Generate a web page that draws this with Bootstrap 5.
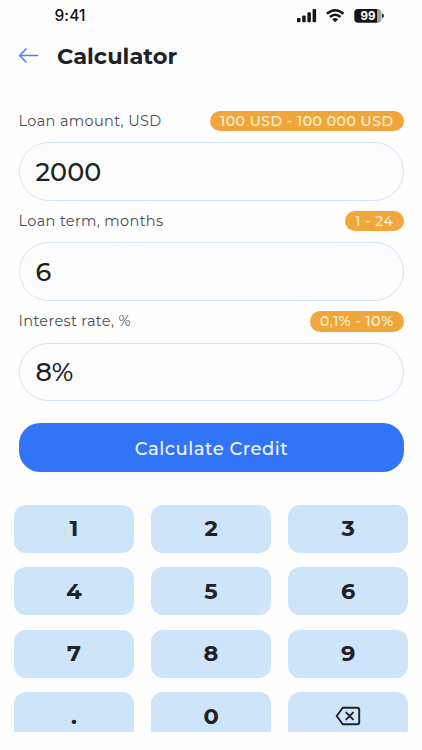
<!DOCTYPE html>
<html lang="en">
<head>
<meta charset="utf-8">
<meta name="viewport" content="width=device-width, initial-scale=1">
<title>Calculator</title>
<link href="https://cdn.jsdelivr.net/npm/bootstrap@5.3.0/dist/css/bootstrap.min.css" rel="stylesheet">
<style>
body{font-family:Montserrat,Inter,"Open Sans",sans-serif;color:#202124;background:#fefefe;height:750px}
.screen{height:732px}
.status{height:32px;padding:0 38px 0 54.5px}
.clock{font-family:Inter,sans-serif;font-size:15.5px;font-weight:500;color:#111;letter-spacing:.1px;line-height:32px}
.topbar{height:48px;padding-left:18px;gap:18px}
.topbar h1{font-size:22.5px;font-weight:700;letter-spacing:0;line-height:48px;height:48px}
.loan-form{padding:30.5px 18.5px 0}
.field{height:100.3px}
.field-head{height:21px}
.field-name{font-size:14.5px;font-weight:400;color:#4c4e51;line-height:21px;white-space:nowrap;letter-spacing:.35px}
.range{background:#f1a63c;color:#fff3d8;font-size:14px;font-weight:500;height:20.5px;line-height:21.5px;padding:0 10px;white-space:nowrap;letter-spacing:.52px}
.form-control.amount{margin-top:10.5px;height:58.5px;border:1.2px solid #d5e5f8;background:#fdfdfd;padding:0 16px;font-size:25.5px;font-weight:500;color:#202124;border-radius:30px}
.btn.calculate{height:49px;margin-top:11.8px;background:#3274f8;color:#f3f7ff;border:0;border-radius:21px;font-size:18px;font-weight:500;letter-spacing:.5px;padding:3px 0 0 1px}
.keypad{display:grid;grid-template-columns:repeat(3,119.3px);column-gap:17.8px;row-gap:14.7px;padding:32.6px 0 0 14.3px}
.btn.key{height:47.8px;background:#cee4f9;border:0;border-radius:12px;font-size:22.5px;font-weight:700;color:#202124;padding:.6px 0 0;line-height:47.8px}
</style>
<script src="https://cdn.jsdelivr.net/npm/bootstrap@5.3.0/dist/js/bootstrap.bundle.min.js"></script>
</head>
<body class="overflow-hidden">
<main class="screen overflow-hidden">
  <div class="status d-flex justify-content-between align-items-center">
    <span class="clock">9:41</span>
    <svg width="87" height="16" viewBox="297 8 87 16">
      <g fill="#151515"><rect x="297" y="18" width="3.5" height="4.2" rx="1"/><rect x="302.2" y="15.4" width="3.5" height="6.8" rx="1"/><rect x="307.4" y="12.3" width="3.5" height="9.9" rx="1"/><rect x="312.6" y="9" width="3.5" height="13.2" rx="1"/></g>
      <g fill="none" stroke="#151515" stroke-width="2.5"><path d="M326.9 13.8Q335.2 6.6 343.5 13.8M329.9 17Q335.2 12.5 340.5 17"/></g><path d="M332.2 19.2Q335.2 17 338.2 19.2L335.2 22.3Z" fill="#151515"/>
      <path d="M358 9H377.5V22.7H358Q354.3 22.7 354.3 19V12.7Q354.3 9 358 9Z" fill="#151515"/><path d="M377.5 9Q381.6 9 381.6 13V18.7Q381.6 22.7 377.5 22.7Z" fill="#a2a2a2"/><path d="M382.2 13.5Q384 14 384 15.8T382.2 18.2Z" fill="#151515"/>
      <text x="368" y="20" text-anchor="middle" font-family="Inter,sans-serif" font-size="11.5" font-weight="700" fill="#fff">99</text>
    </svg>
  </div>
  <header class="topbar d-flex align-items-center">
    <svg width="21" height="18" viewBox="0 0 21 18" fill="none" stroke="#4a80f5" stroke-width="1.6" stroke-linecap="round" stroke-linejoin="round"><path d="M19.5 8.5H2M8 2L1.6 8.5L8 15"/></svg>
    <h1 class="m-0">Calculator</h1>
  </header>
  <form class="loan-form">
    <div class="field">
      <div class="field-head d-flex justify-content-between"><label class="field-name" for="sum">Loan amount, USD</label><span class="range rounded-pill">100 USD - 100 000 USD</span></div>
      <input class="form-control amount" id="sum" value="2000">
    </div>
    <div class="field">
      <div class="field-head d-flex justify-content-between"><label class="field-name" for="term">Loan term, months</label><span class="range rounded-pill">1 - 24</span></div>
      <input class="form-control amount" id="term" value="6">
    </div>
    <div class="field">
      <div class="field-head d-flex justify-content-between"><label class="field-name" for="rate">Interest rate, %</label><span class="range rounded-pill">0,1% - 10%</span></div>
      <input class="form-control amount" id="rate" value="8%">
    </div>
    <button class="btn calculate w-100" type="button">Calculate Credit</button>
  </form>
  <div class="keypad">
    <button class="btn key">1</button><button class="btn key">2</button><button class="btn key">3</button>
    <button class="btn key">4</button><button class="btn key">5</button><button class="btn key">6</button>
    <button class="btn key">7</button><button class="btn key">8</button><button class="btn key">9</button>
    <button class="btn key">.</button><button class="btn key">0</button>
    <button class="btn key d-flex align-items-center justify-content-center" aria-label="Delete"><svg width="26" height="20" viewBox="0 0 26 20" fill="none" stroke="#202124" stroke-width="1.9" stroke-linecap="round" stroke-linejoin="round"><path d="M7.7 1.8H22.5Q24.2 1.8 24.2 3.5V16.5Q24.2 18.2 22.5 18.2H7.7L1.7 10ZM11.3 6.6L18 13.4M18 6.6L11.3 13.4"/></svg></button>
  </div>
</main>
</body>
</html>
